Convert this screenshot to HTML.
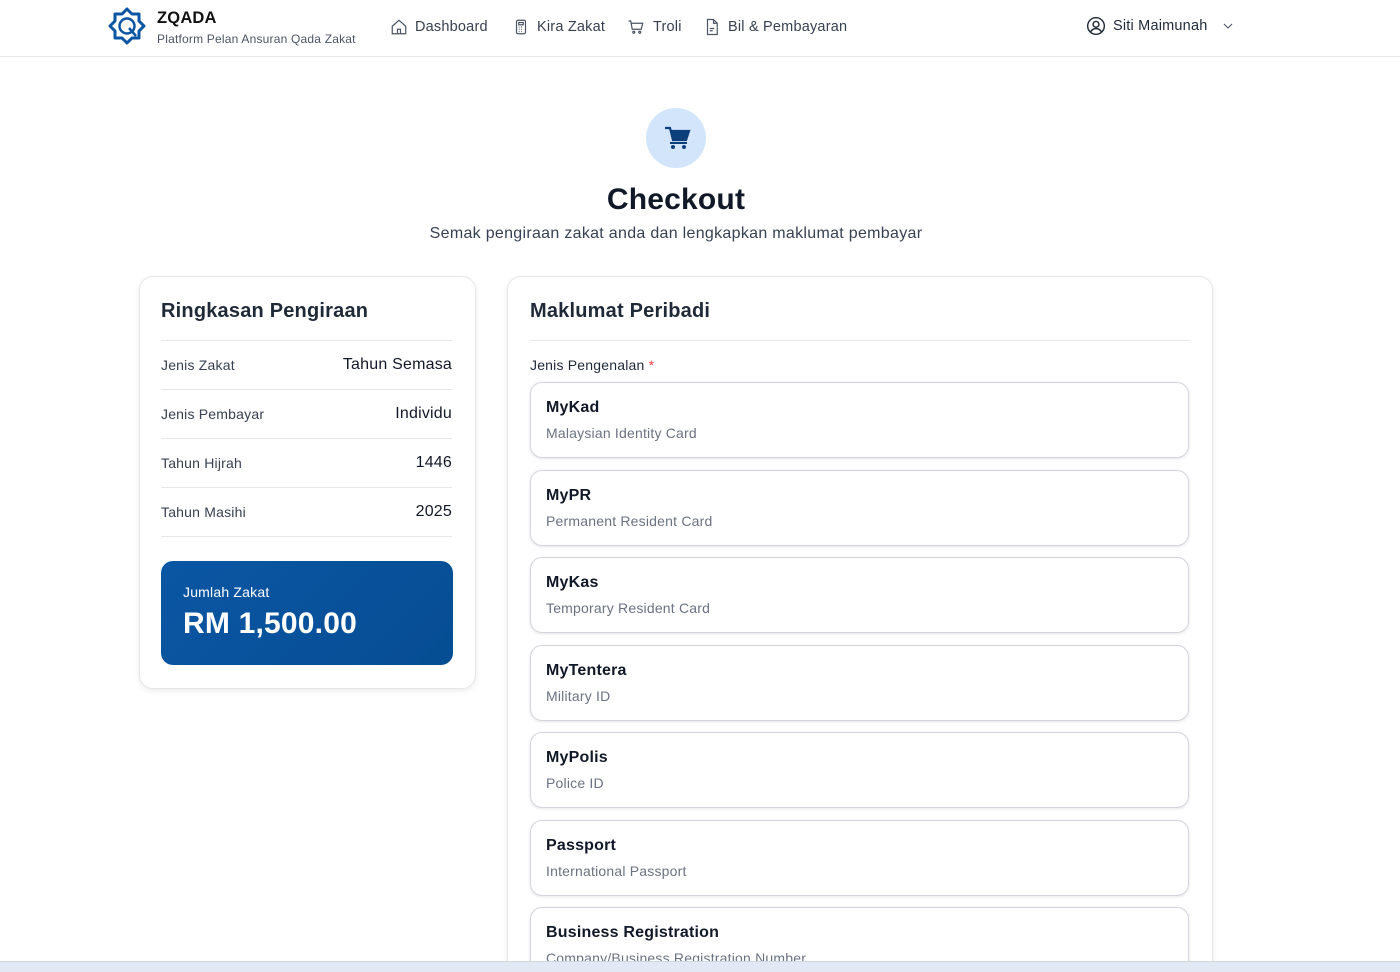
<!DOCTYPE html>
<html><head><meta charset="utf-8"><style>
*{box-sizing:border-box;margin:0;padding:0}
html,body{width:1400px;height:972px;overflow:hidden}
body{background:#fff;font-family:"Liberation Sans",sans-serif;color:#111827;position:relative;letter-spacing:.2px}
.hdr{position:absolute;left:0;top:0;width:1400px;height:57px;border-bottom:1px solid #e5e7eb;background:#fff}
.abs{position:absolute}
.nav{position:absolute;top:18px;font-size:14.5px;color:#374151;display:flex;align-items:center;gap:7px}
.card{position:absolute;background:#fff;border:1px solid #e5e7eb;border-radius:14px;box-shadow:0 2px 6px rgba(0,0,0,.08)}
.row{position:absolute;left:21px;width:291px;height:49px;border-bottom:1px solid #e5e7eb;display:flex;justify-content:space-between;align-items:center;font-size:14px;color:#374151}
.row b{font-weight:normal;color:#111827;font-size:16px}
.opt{position:absolute;left:21px;width:659px;height:76px;border:1px solid #d1d5db;border-radius:12px;box-shadow:0 1px 3px rgba(0,0,0,.1);padding:16px 15px}
.opt .t{font-size:16px;font-weight:bold;color:#111827}
.opt .s{font-size:14px;color:#6b7280;margin-top:8px}
</style></head><body>
<div class="hdr">
 <svg class="abs" style="left:108px;top:7px" width="38" height="38" viewBox="0 0 38 38"><polygon points="19,2 24,7 31,7 31,14 36,19 31,24 31,31 24,31 19,36 14,31 7,31 7,24 2,19 7,14 7,7 14,7" fill="none" stroke="#0b56a4" stroke-width="3" stroke-linejoin="round"/><circle cx="19" cy="19" r="7.5" fill="none" stroke="#0b56a4" stroke-width="2.5"/><line x1="21" y1="21" x2="28" y2="29" stroke="#0b56a4" stroke-width="2.5"/></svg>
 <div class="abs" style="left:157px;top:9px;font-size:16.5px;font-weight:bold;color:#111">ZQADA</div>
 <div class="abs" style="left:157px;top:32px;font-size:12px;color:#4b5563">Platform Pelan Ansuran Qada Zakat</div>
 <div class="nav" style="left:390px"><svg width="18" height="18" viewBox="0 0 24 24" fill="none" stroke="#4b5563" stroke-width="1.6"><path d="M3 11l9-8 9 8v10H3z M10 21v-6h4v6"/></svg>Dashboard</div>
 <div class="nav" style="left:512px"><svg width="18" height="18" viewBox="0 0 24 24" fill="none" stroke="#4b5563" stroke-width="1.6"><rect x="6" y="3" width="12" height="18" rx="2"/><rect x="9" y="6" width="6" height="3"/><path d="M9 12h1M12 12h1M9 15h1M12 15h1M9 18h1M12 18h1"/></svg>Kira Zakat</div>
 <div class="nav" style="left:626px"><svg width="20" height="18" viewBox="0 0 24 24" fill="none" stroke="#4b5563" stroke-width="1.6"><path d="M2 4h3l2 11h12l2-8H6"/><circle cx="9" cy="19" r="1.3"/><circle cx="17" cy="19" r="1.3"/></svg>Troli</div>
 <div class="nav" style="left:703px"><svg width="18" height="18" viewBox="0 0 24 24" fill="none" stroke="#4b5563" stroke-width="1.6"><path d="M6 2h8l5 5v15H6z M14 2v5h5 M9 14h6M9 17h4"/></svg>Bil &amp; Pembayaran</div>
 <div class="nav" style="left:1086px;top:16px;color:#1f2937"><svg width="20" height="20" viewBox="0 0 24 24" fill="none" stroke="#1f2937" stroke-width="1.7"><circle cx="12" cy="12" r="10"/><circle cx="12" cy="10" r="3.5"/><path d="M5.5 19c2-3 4-4 6.5-4s4.5 1 6.5 4"/></svg>Siti Maimunah<svg width="16" height="16" viewBox="0 0 24 24" fill="none" stroke="#4b5563" stroke-width="1.6" style="margin-left:6px"><path d="M6 9l6 6 6-6"/></svg></div>
</div>
<div class="abs" style="left:646px;top:108px;width:60px;height:60px;border-radius:50%;background:#d3e5fb"></div>
<svg class="abs" style="left:663px;top:125px" width="28" height="26" viewBox="0 0 28 26"><path d="M2 3h5l3 12h13l3-9H8" fill="none" stroke="#0d3f7a" stroke-width="2.2"/><path d="M8 6h18l-3 9H10z" fill="#0d3f7a"/><rect x="7" y="17" width="17" height="2" fill="#0d3f7a"/><circle cx="10" cy="22" r="2" fill="#0d3f7a"/><circle cx="21" cy="22" r="2" fill="#0d3f7a"/></svg>
<div class="abs" style="left:0;width:1352px;top:183px;text-align:center;font-size:30px;font-weight:bold;color:#111827">Checkout</div>
<div class="abs" style="left:0;width:1352px;top:225px;text-align:center;font-size:16px;color:#374151;letter-spacing:.3px">Semak pengiraan zakat anda dan lengkapkan maklumat pembayar</div>

<div class="card" style="left:139px;top:276px;width:337px;height:413px">
 <div class="abs" style="left:21px;top:23px;font-size:20px;font-weight:bold;color:#1f2937">Ringkasan Pengiraan</div>
 <div class="abs" style="left:21px;top:63px;width:291px;border-top:1px solid #e5e7eb"></div>
 <div class="row" style="top:64px">Jenis Zakat<b>Tahun Semasa</b></div>
 <div class="row" style="top:113px">Jenis Pembayar<b>Individu</b></div>
 <div class="row" style="top:162px">Tahun Hijrah<b>1446</b></div>
 <div class="row" style="top:211px">Tahun Masihi<b>2025</b></div>
 <div class="abs" style="left:21px;top:284px;width:292px;height:104px;border-radius:12px;background:linear-gradient(135deg,#0b56a4,#064d93);color:#fff">
  <div class="abs" style="left:22px;top:23px;font-size:14px">Jumlah Zakat</div>
  <div class="abs" style="left:22px;top:46px;font-size:30px;font-weight:bold">RM 1,500.00</div>
 </div>
</div>

<div class="card" style="left:507px;top:276px;width:706px;height:720px">
 <div class="abs" style="left:22px;top:23px;font-size:20px;font-weight:bold;color:#1f2937">Maklumat Peribadi</div>
 <div class="abs" style="left:22px;top:63px;width:660px;border-top:1px solid #e5e7eb"></div>
 <div class="abs" style="left:22px;top:80px;font-size:14px;color:#1f2937">Jenis Pengenalan <span style="color:#ef4444">*</span></div>
 <div class="opt" style="top:105px;left:22px"><div class="t">MyKad</div><div class="s">Malaysian Identity Card</div></div>
 <div class="opt" style="top:193px;left:22px"><div class="t">MyPR</div><div class="s">Permanent Resident Card</div></div>
 <div class="opt" style="top:280px;left:22px"><div class="t">MyKas</div><div class="s">Temporary Resident Card</div></div>
 <div class="opt" style="top:368px;left:22px"><div class="t">MyTentera</div><div class="s">Military ID</div></div>
 <div class="opt" style="top:455px;left:22px"><div class="t">MyPolis</div><div class="s">Police ID</div></div>
 <div class="opt" style="top:543px;left:22px"><div class="t">Passport</div><div class="s">International Passport</div></div>
 <div class="opt" style="top:630px;left:22px"><div class="t">Business Registration</div><div class="s">Company/Business Registration Number</div></div>
</div>
<div class="abs" style="left:0;top:961px;width:1400px;height:11px;background:#e2e8f4;border-top:1px solid #cfd6e3;z-index:10"></div>
</body></html>
